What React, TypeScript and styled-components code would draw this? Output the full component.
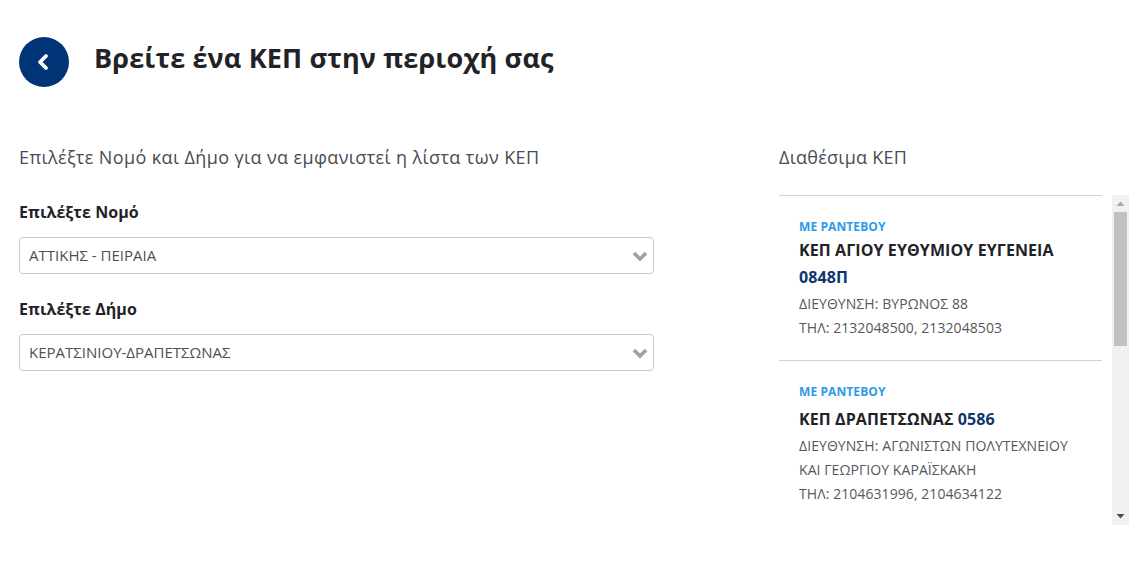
import React from "react";
import styled, { createGlobalStyle } from "styled-components";

const Global = createGlobalStyle`
  html, body { margin: 0; padding: 0; background: #fff; height: 100%; overflow: hidden; }
  body { font-family: "Open Sans", "Noto Sans", sans-serif; color: #1f2328; }
`;

const Page = styled.div`
  width: 1141px;
  height: 563px;
  box-sizing: border-box;
  padding: 37px 12px 0 19px;
`;
const Header = styled.header`
  display: flex;
  align-items: center;
  gap: 25px;
  height: 50px;
`;
const BackButton = styled.div`
  width: 50px;
  height: 50px;
  border-radius: 50%;
  background: #003476;
  display: flex;
  align-items: center;
  justify-content: center;
`;
const Title = styled.h1`
  margin: 0 0 9px;
  font-size: 27px;
  line-height: 36px;
  font-weight: 700;
  letter-spacing: 0.16px;
  color: #1f2328;
`;
const Columns = styled.div`
  display: grid;
  grid-template-columns: 635px 350px;
  column-gap: 125px;
  margin-top: 57px;
`;
const Column = styled.section`
  display: flex;
  flex-direction: column;
  min-width: 0;
`;
const Lead = styled.p`
  margin: 0;
  font-size: 18px;
  line-height: 26px;
  font-weight: 400;
  letter-spacing: 0.38px;
  color: #484c52;
`;
const FieldLabel = styled.label`
  display: block;
  margin-top: ${(p: { $top: number }) => p.$top}px;
  font-size: 16px;
  line-height: 24px;
  font-weight: 700;
  letter-spacing: 0.06px;
  color: #1f2328;
`;
const Select = styled.div`
  margin-top: 13px;
  height: 37px;
  box-sizing: border-box;
  border: 1px solid #c9c9c9;
  border-radius: 4px;
  display: flex;
  align-items: center;
  justify-content: space-between;
  padding: 0 3px 0 9px;
  font-size: 15px;
  color: #4c4f54;
`;
const SelectValue = styled.span`
  margin-bottom: 2px;
`;
const RightLead = styled(Lead)`
  margin-bottom: 25px;
  letter-spacing: 0.25px;
`;
const ListWrap = styled.div`
  display: flex;
  height: 330px;
  gap: 10px;
`;
const Name = styled.div`
  font-size: 16px;
  line-height: 24px;
  font-weight: 700;
  letter-spacing: 0.1px;
  color: #1f2328;
  margin-top: 3px;
`;
const List = styled.div`
  width: 323px;
  overflow: hidden;
  border-top: 1px solid #d2d2d2;
  box-sizing: border-box;
`;
const Item = styled.article`
  padding: 22px 20px 19px 20px;
  border-bottom: 1px solid #d2d2d2;

  &:first-child {
    padding-bottom: 20px;
  }
  &:first-child ${Name} {
    margin-top: 2px;
  }
`;
const Badge = styled.div`
  font-size: 12px;
  line-height: 18px;
  font-weight: 700;
  letter-spacing: 0.1px;
  color: #2c9ae8;
`;
const Code = styled.span`
  display: inline-block;
  line-height: 30px;
  color: #0d3570;
`;
const Info = styled.div`
  font-size: 14px;
  line-height: 24px;
  letter-spacing: 0.07px;
  color: #55585c;
`;
const Scrollbar = styled.div`
  width: 17px;
  height: 330px;
  background: #f1f1f1;
  display: flex;
  flex-direction: column;
  align-items: center;
`;
const ArrowBox = styled.div`
  height: 17px;
  width: 17px;
  flex: none;
  display: flex;
  align-items: center;
  justify-content: center;
`;
const Thumb = styled.div`
  width: 13px;
  height: 134px;
  flex: none;
  background: #c1c1c1;
`;
const Track = styled.div`
  flex: 1;
`;

const Chevron = () => (
  <svg width="20" height="20" viewBox="0 0 20 20">
    <path d="M4 7 L10 13 L16 7" fill="none" stroke="#a0a0a0" strokeWidth="3.6" />
  </svg>
);

export default function App() {
  return (
    <>
      <Global />
      <Page>
        <Header>
          <BackButton>
            <svg width="16" height="20" viewBox="0 0 16 20">
              <path d="M10 4 L4 10 L10 16" fill="none" stroke="#fff" strokeWidth="3.8" strokeLinejoin="round" strokeLinecap="round" />
            </svg>
          </BackButton>
          <Title>Βρείτε ένα ΚΕΠ στην περιοχή σας</Title>
        </Header>
        <Columns>
          <Column>
            <Lead>Επιλέξτε Νομό και Δήμο για να εμφανιστεί η λίστα των ΚΕΠ</Lead>
            <FieldLabel $top={30}>Επιλέξτε Νομό</FieldLabel>
            <Select>
              <SelectValue>ΑΤΤΙΚΗΣ - ΠΕΙΡΑΙΑ</SelectValue>
              <Chevron />
            </Select>
            <FieldLabel $top={23}>Επιλέξτε Δήμο</FieldLabel>
            <Select>
              <SelectValue>ΚΕΡΑΤΣΙΝΙΟΥ-ΔΡΑΠΕΤΣΩΝΑΣ</SelectValue>
              <Chevron />
            </Select>
          </Column>
          <Column>
            <RightLead>Διαθέσιμα ΚΕΠ</RightLead>
            <ListWrap>
              <List>
                <Item>
                  <Badge>ΜΕ ΡΑΝΤΕΒΟΥ</Badge>
                  <Name>
                    ΚΕΠ ΑΓΙΟΥ ΕΥΘΥΜΙΟΥ ΕΥΓΕΝΕΙΑ <Code>0848Π</Code>
                  </Name>
                  <Info>ΔΙΕΥΘΥΝΣΗ: ΒΥΡΩΝΟΣ 88</Info>
                  <Info>ΤΗΛ: 2132048500, 2132048503</Info>
                </Item>
                <Item>
                  <Badge>ΜΕ ΡΑΝΤΕΒΟΥ</Badge>
                  <Name>
                    ΚΕΠ ΔΡΑΠΕΤΣΩΝΑΣ <Code>0586</Code>
                  </Name>
                  <Info>ΔΙΕΥΘΥΝΣΗ: ΑΓΩΝΙΣΤΩΝ ΠΟΛΥΤΕΧΝΕΙΟΥ ΚΑΙ ΓΕΩΡΓΙΟΥ ΚΑΡΑΪΣΚΑΚΗ</Info>
                  <Info>ΤΗΛ: 2104631996, 2104634122</Info>
                </Item>
              </List>
              <Scrollbar>
                <ArrowBox>
                  <svg width="9" height="5" viewBox="0 0 9 5"><path d="M0.5 5 L4.5 0.5 L8.5 5 Z" fill="#a8a8a8" /></svg>
                </ArrowBox>
                <Thumb />
                <Track />
                <ArrowBox>
                  <svg width="9" height="5" viewBox="0 0 9 5"><path d="M0.5 0 L4.5 4.5 L8.5 0 Z" fill="#505050" /></svg>
                </ArrowBox>
              </Scrollbar>
            </ListWrap>
          </Column>
        </Columns>
      </Page>
    </>
  );
}
